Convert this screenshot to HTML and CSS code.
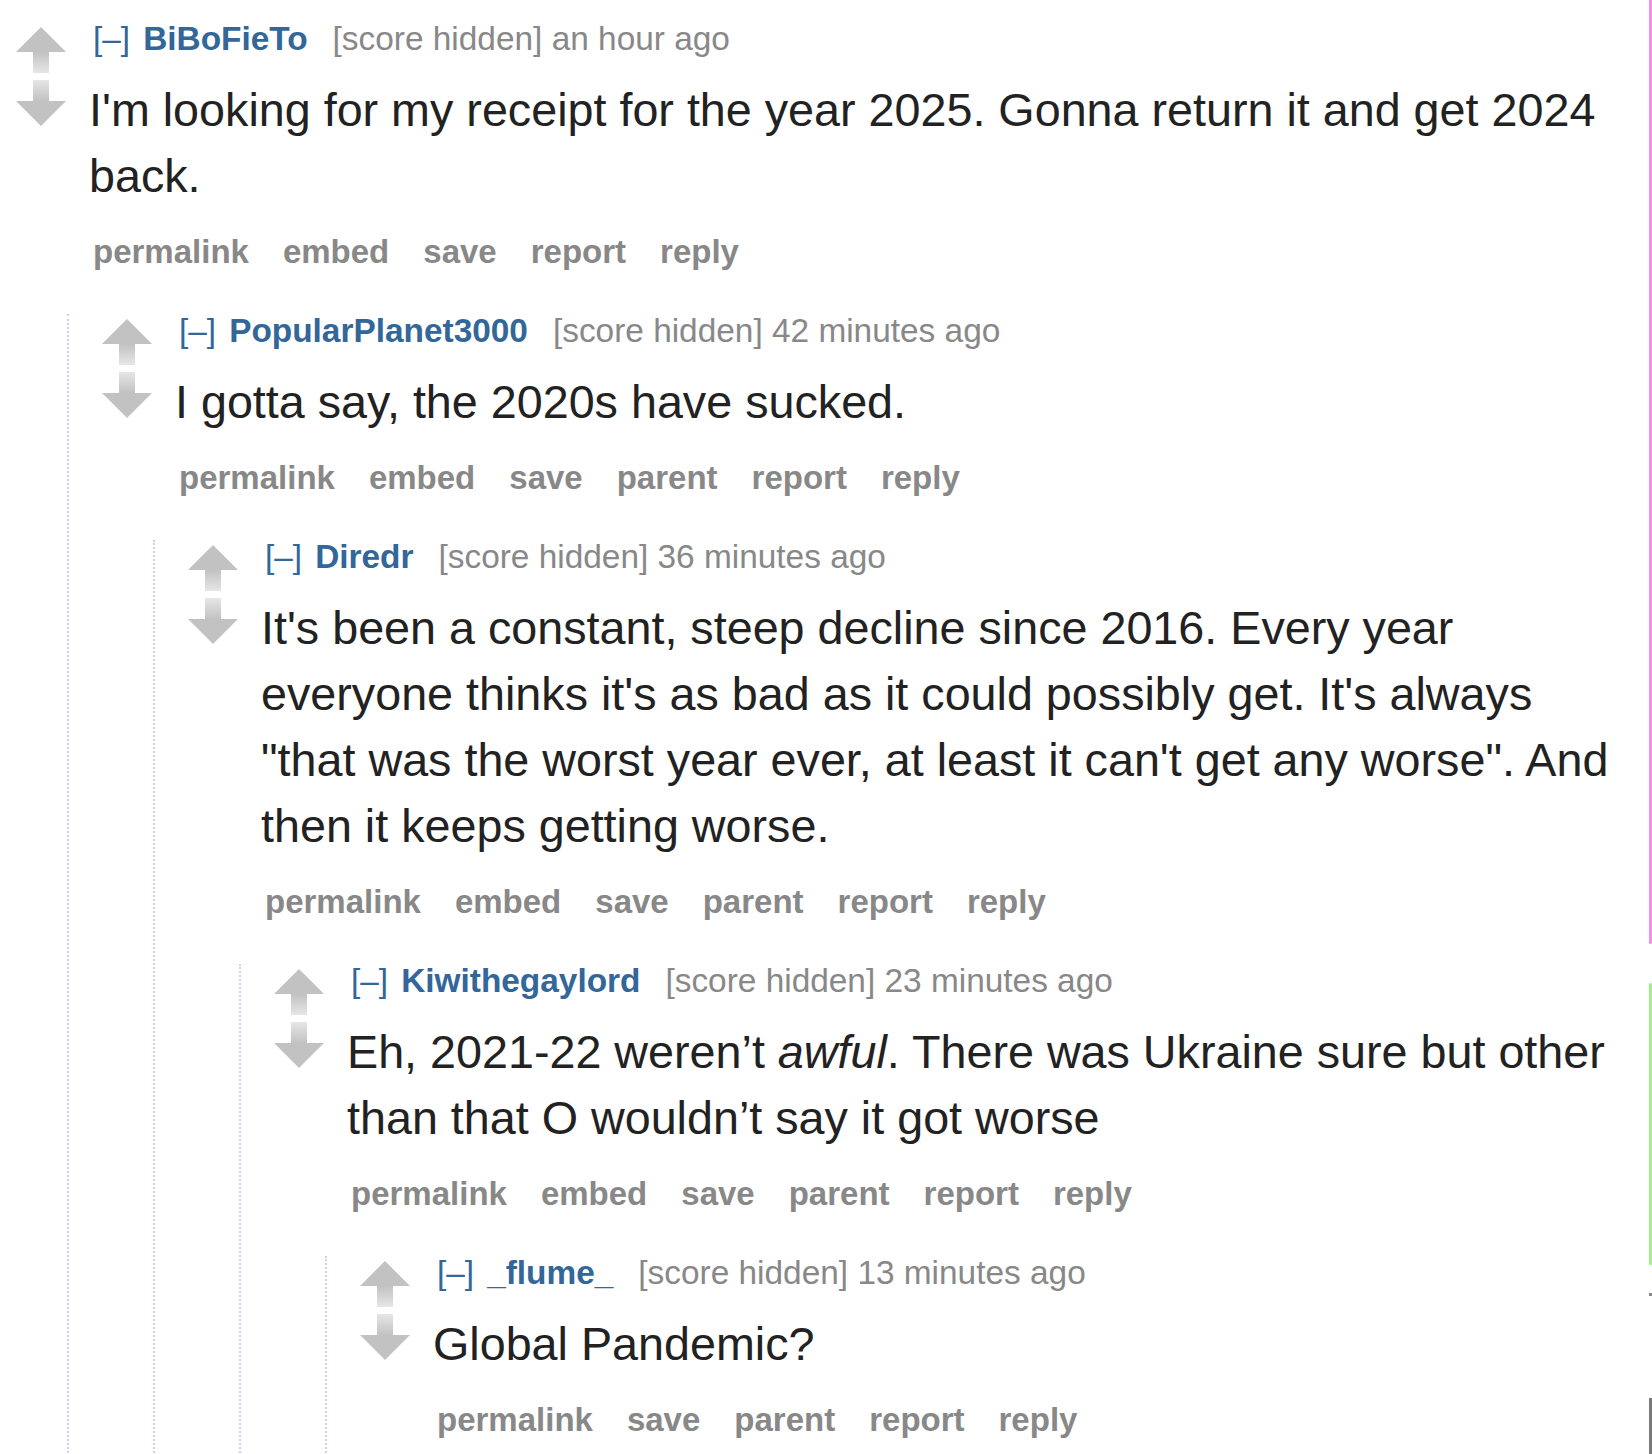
FILE: index.html
```html
<!DOCTYPE html>
<html lang="en">
<head>
<meta charset="utf-8">
<title>Comments</title>
<link rel="stylesheet" href="styles.css">
</head>
<body>
<div class="page">
  <div class="comment">
    <div class="midcol">
      <svg class="arrow" viewBox="0 0 50 46" width="50" height="46"><defs><linearGradient id="gu" x1="0" y1="0" x2="0" y2="1"><stop offset="0" stop-color="#c2c2c2"/><stop offset="1" stop-color="#e6e6e6"/></linearGradient><linearGradient id="gd" x1="0" y1="0" x2="0" y2="1"><stop offset="0" stop-color="#e6e6e6"/><stop offset="1" stop-color="#c2c2c2"/></linearGradient></defs><polygon points="25,0 50,25 0,25" fill="#c2c2c2"/><rect x="17" y="25" width="16" height="21" fill="url(#gu)"/></svg>
      <svg class="arrow" viewBox="0 0 50 46" width="50" height="46"><rect x="17" y="0" width="16" height="21" fill="url(#gd)"/><polygon points="0,21 50,21 25,46" fill="#c2c2c2"/></svg>
    </div>
    <div class="entry">
      <p class="tagline"><a class="expand">[–]</a><a class="author">BiBoFieTo</a><span class="score">[score hidden]</span> <span class="time">an hour ago</span></p>
      <div class="md"><p>I'm looking for my receipt for the year 2025. Gonna return it and get 2024 back.</p></div>
      <ul class="buttons"><li>permalink</li><li>embed</li><li>save</li><li>report</li><li>reply</li></ul>
    </div>
    <div class="child">
      <div class="comment">
        <div class="midcol">
          <svg class="arrow" viewBox="0 0 50 46" width="50" height="46"><polygon points="25,0 50,25 0,25" fill="#c2c2c2"/><rect x="17" y="25" width="16" height="21" fill="url(#gu)"/></svg>
          <svg class="arrow" viewBox="0 0 50 46" width="50" height="46"><rect x="17" y="0" width="16" height="21" fill="url(#gd)"/><polygon points="0,21 50,21 25,46" fill="#c2c2c2"/></svg>
        </div>
        <div class="entry">
          <p class="tagline"><a class="expand">[–]</a><a class="author">PopularPlanet3000</a><span class="score">[score hidden]</span> <span class="time">42 minutes ago</span></p>
          <div class="md"><p>I gotta say, the 2020s have sucked.</p></div>
          <ul class="buttons"><li>permalink</li><li>embed</li><li>save</li><li>parent</li><li>report</li><li>reply</li></ul>
        </div>
        <div class="child">
          <div class="comment">
            <div class="midcol">
              <svg class="arrow" viewBox="0 0 50 46" width="50" height="46"><polygon points="25,0 50,25 0,25" fill="#c2c2c2"/><rect x="17" y="25" width="16" height="21" fill="url(#gu)"/></svg>
              <svg class="arrow" viewBox="0 0 50 46" width="50" height="46"><rect x="17" y="0" width="16" height="21" fill="url(#gd)"/><polygon points="0,21 50,21 25,46" fill="#c2c2c2"/></svg>
            </div>
            <div class="entry">
              <p class="tagline"><a class="expand">[–]</a><a class="author">Diredr</a><span class="score">[score hidden]</span> <span class="time">36 minutes ago</span></p>
              <div class="md"><p>It's been a constant, steep decline since 2016. Every year everyone thinks it's as bad as it could possibly get. It's always "that was the worst year ever, at least it can't get any worse". And then it keeps getting worse.</p></div>
              <ul class="buttons"><li>permalink</li><li>embed</li><li>save</li><li>parent</li><li>report</li><li>reply</li></ul>
            </div>
            <div class="child">
              <div class="comment">
                <div class="midcol">
                  <svg class="arrow" viewBox="0 0 50 46" width="50" height="46"><polygon points="25,0 50,25 0,25" fill="#c2c2c2"/><rect x="17" y="25" width="16" height="21" fill="url(#gu)"/></svg>
                  <svg class="arrow" viewBox="0 0 50 46" width="50" height="46"><rect x="17" y="0" width="16" height="21" fill="url(#gd)"/><polygon points="0,21 50,21 25,46" fill="#c2c2c2"/></svg>
                </div>
                <div class="entry">
                  <p class="tagline"><a class="expand">[–]</a><a class="author">Kiwithegaylord</a><span class="score">[score hidden]</span> <span class="time">23 minutes ago</span></p>
                  <div class="md"><p>Eh, 2021-22 weren’t <em>awful</em>. There was Ukraine sure but other than that O wouldn’t say it got worse</p></div>
                  <ul class="buttons"><li>permalink</li><li>embed</li><li>save</li><li>parent</li><li>report</li><li>reply</li></ul>
                </div>
                <div class="child">
                  <div class="comment last">
                    <div class="midcol">
                      <svg class="arrow" viewBox="0 0 50 46" width="50" height="46"><polygon points="25,0 50,25 0,25" fill="#c2c2c2"/><rect x="17" y="25" width="16" height="21" fill="url(#gu)"/></svg>
                      <svg class="arrow" viewBox="0 0 50 46" width="50" height="46"><rect x="17" y="0" width="16" height="21" fill="url(#gd)"/><polygon points="0,21 50,21 25,46" fill="#c2c2c2"/></svg>
                    </div>
                    <div class="entry">
                      <p class="tagline"><a class="expand">[–]</a><a class="author">_flume_</a><span class="score">[score hidden]</span> <span class="time">13 minutes ago</span></p>
                      <div class="md"><p>Global Pandemic?</p></div>
                      <ul class="buttons"><li>permalink</li><li>save</li><li>parent</li><li>report</li><li>reply</li></ul>
                    </div>
                  </div>
                </div>
              </div>
            </div>
          </div>
        </div>
      </div>
    </div>
  </div>
</div>
<div class="markers">
  <span class="mark pink"></span>
  <span class="mark green"></span>
  <span class="mark tick"></span>
  <span class="mark thumb"></span>
</div>
</body>
</html>
```

FILE: styles.css
```css
html, body {
  margin: 0;
  padding: 0;
  height: 100%;
  overflow: hidden;
  background: #fff;
}

body {
  font-family: "Liberation Sans", Arial, Helvetica, sans-serif;
  color: #222;
  position: relative;
}

.page {
  padding: 22px 0 0 0;
  width: 1625px;
}

.comment {
  display: grid;
  grid-template-columns: 85px 1fr;
}

.comment.last {
  padding-bottom: 200px;
}

.midcol {
  padding: 5px 0 0 16px;
  display: flex;
  flex-direction: column;
  gap: 7px;
}

.arrow {
  display: block;
}

.entry {
  min-width: 0;
}

.tagline {
  margin: 0;
  padding-left: 8px;
  font-size: 33.4px;
  line-height: 34px;
  color: #888;
  white-space: nowrap;
}

.expand {
  color: #369;
  margin-right: 13px;
}

.author {
  color: #369;
  font-weight: bold;
  margin-right: 25px;
}

.md {
  margin-top: 21px;
  padding-left: 4px;
  font-size: 46.7px;
  line-height: 66px;
  color: #222;
}

.md p {
  margin: 0;
}

.buttons {
  list-style: none;
  margin: 26px 0 0 0;
  padding: 0 0 0 8px;
  display: flex;
  font-size: 33px;
  line-height: 34px;
  font-weight: bold;
  color: #888;
}

.buttons li {
  margin-right: 34px;
}

.child {
  grid-column: 1 / -1;
  margin: 45px 0 0 67px;
  border-left: 2px dotted #ccccff;
  padding-left: 17px;
}

.markers {
  position: absolute;
  top: 0;
  right: 0;
  width: 3px;
  height: 1454px;
}

.mark {
  position: absolute;
  left: 0;
  width: 3px;
  display: block;
}

.mark.pink {
  top: 0;
  height: 944px;
  background: #f58bf3;
  border-radius: 0 0 2px 2px;
}

.mark.green {
  top: 983px;
  height: 282px;
  background: #a2ef86;
  border-radius: 2px;
}

.mark.tick {
  top: 1293px;
  height: 3px;
  background: #888;
}

.mark.thumb {
  top: 1398px;
  height: 56px;
  background: #7a7a7a;
}
```
